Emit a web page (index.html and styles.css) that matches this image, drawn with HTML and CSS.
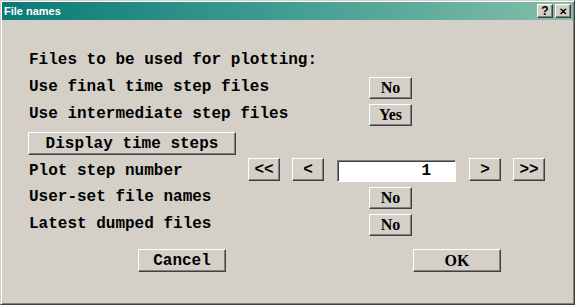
FILE: index.html
```html
<!DOCTYPE html>
<html lang="en">
<head>
    <meta charset="UTF-8">
    <title>File names</title>
    <link rel="stylesheet" href="styles.css">
</head>
<body>
    <div class="window">
        <div class="titlebar">
            <span class="title">File names</span>
            <div class="title-buttons">
                <span class="tbtn">?</span>
                <span class="tbtn close">&#x2715;</span>
            </div>
        </div>

        <div class="content">
            <div class="row row-head">
                <span class="label">Files to be used for plotting:</span>
            </div>
            <div class="row">
                <span class="label wide">Use final time step files</span>
                <button class="btn choice">No</button>
            </div>
            <div class="row">
                <span class="label wide">Use intermediate step files</span>
                <button class="btn choice">Yes</button>
            </div>
            <div class="row row-display">
                <button class="btn mono display">Display time steps</button>
            </div>
            <div class="row row-plot">
                <span class="label plot">Plot step number</span>
                <div class="stepper">
                    <button class="btn mono arrow">&lt;&lt;</button>
                    <button class="btn mono arrow">&lt;</button>
                    <input class="field" type="text" value="1">
                    <button class="btn mono arrow">&gt;</button>
                    <button class="btn mono arrow">&gt;&gt;</button>
                </div>
            </div>
            <div class="row row-user">
                <span class="label wide">User-set file names</span>
                <button class="btn choice">No</button>
            </div>
            <div class="row">
                <span class="label wide">Latest dumped files</span>
                <button class="btn choice">No</button>
            </div>
            <div class="row row-actions">
                <button class="btn mono action cancel">Cancel</button>
                <button class="btn choice action ok">OK</button>
            </div>
        </div>
    </div>
</body>
</html>
```

FILE: styles.css
```css
:root {
    --face: #d4d0c8;
    --light: #ffffff;
    --shadow: #808080;
    --dark: #404040;
}
body {
    margin: 0;
    background: var(--face);
}
.window {
    width: 575px;
    height: 305px;
    box-sizing: border-box;
    padding: 1px;
    background: var(--face);
    border: 1px solid;
    border-color: var(--face) var(--dark) var(--dark) var(--face);
    box-shadow: inset 1px 1px var(--light), inset -1px -1px var(--shadow);
}
.titlebar {
    height: 18px;
    display: flex;
    align-items: center;
    justify-content: space-between;
    padding: 0 2px;
    background: linear-gradient(to right, #0a7a77, #3b9a90 45%, #83bea9);
}
.title {
    font-family: "Liberation Sans", Arial, sans-serif;
    font-weight: bold;
    font-size: 11px;
    color: #ffffff;
}
.title-buttons {
    display: flex;
    gap: 2px;
}
.tbtn {
    width: 16px;
    height: 14px;
    box-sizing: border-box;
    display: flex;
    align-items: center;
    justify-content: center;
    background: var(--face);
    border: 1px solid;
    border-color: var(--light) var(--dark) var(--dark) var(--light);
    box-shadow: inset -1px -1px var(--shadow);
    font-family: "Liberation Sans", Arial, sans-serif;
    font-weight: bold;
    font-size: 12px;
    color: #000000;
}
.tbtn.close {
    font-size: 10px;
}
.content {
    display: flex;
    flex-direction: column;
    gap: 5px;
    padding: 30px 0 0 27px;
}
.row {
    display: flex;
    align-items: flex-start;
    height: 22px;
}
.row-display {
    margin-top: 1px;
    height: 23px;
}
.row-plot {
    margin-top: -2px;
    height: 23px;
}
.row-user {
    margin-top: 1px;
}
.row-actions {
    margin-top: 8px;
    height: 23px;
}
.label {
    font-family: "Liberation Mono", "Courier New", monospace;
    font-weight: bold;
    font-size: 16px;
    line-height: 16px;
    padding-top: 2px;
    color: #000000;
    white-space: pre;
}
.label.wide {
    width: 340px;
}
.label.plot {
    width: 219px;
    padding-top: 5px;
}
.btn {
    box-sizing: border-box;
    height: 22px;
    padding: 0;
    background: var(--face);
    border: 1px solid;
    border-color: var(--light) var(--dark) var(--dark) var(--light);
    box-shadow: inset -1px -1px var(--shadow);
    color: #000000;
    font-weight: bold;
    cursor: pointer;
}
.btn.choice {
    width: 43px;
    font-family: "Liberation Serif", "Times New Roman", serif;
    font-size: 16px;
}
.btn.mono {
    font-family: "Liberation Mono", "Courier New", monospace;
    font-size: 16px;
}
.btn.display {
    width: 208px;
    height: 23px;
    margin-left: -1px;
}
.stepper {
    display: flex;
    align-items: flex-start;
    gap: 12px;
}
.btn.arrow {
    width: 32px;
    height: 23px;
}
.field {
    box-sizing: border-box;
    width: 119px;
    height: 22px;
    margin: 2px 1px 0;
    padding: 0 24px 0 0;
    text-align: right;
    background: #ffffff;
    border: 1px solid;
    border-color: var(--shadow) var(--light) var(--light) var(--shadow);
    box-shadow: inset 1px 1px var(--dark);
    font-family: "Liberation Mono", "Courier New", monospace;
    font-weight: bold;
    font-size: 16px;
    color: #000000;
}
.btn.action {
    width: 88px;
    height: 23px;
}
.btn.cancel {
    margin-left: 109px;
}
.btn.ok {
    margin-left: 187px;
}
```
